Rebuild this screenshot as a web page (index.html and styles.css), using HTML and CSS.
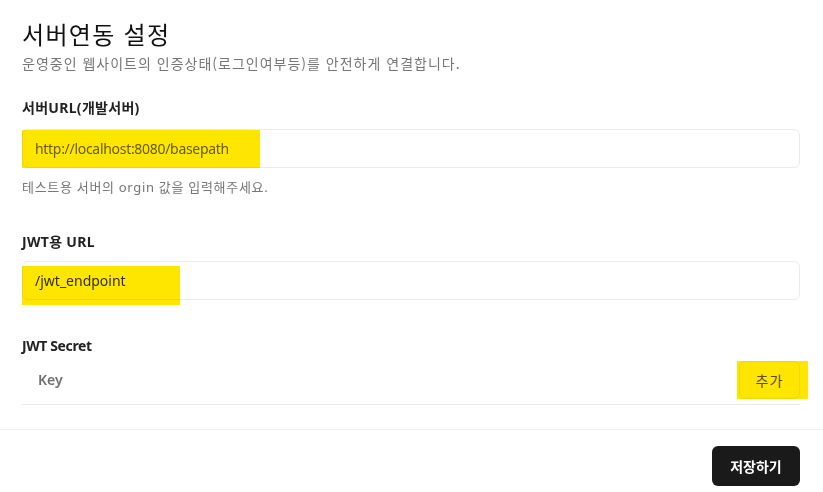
FILE: index.html
```html
<!DOCTYPE html>
<html lang="ko">
<head>
<meta charset="utf-8">
<title>서버연동 설정</title>
<link rel="stylesheet" href="styles.css">
</head>
<body>
<div class="page">
  <header class="head">
    <h1 class="title">서버연동 설정</h1>
    <p class="subtitle">운영중인 웹사이트의 인증상태(로그인여부등)를 안전하게 연결합니다.</p>
  </header>

  <section class="field field-first">
    <div class="label">서버URL(개발서버)</div>
    <div class="input input-a">
      <span class="value">http://localhost:8080/basepath</span>
      <span class="mark mark-a"></span>
    </div>
    <div class="help">테스트용 서버의 orgin 값을 입력해주세요.</div>
  </section>

  <section class="field">
    <div class="label label-b">JWT용 URL</div>
    <div class="input input-b">
      <span class="value value-dark">/jwt_endpoint</span>
      <span class="mark mark-b"></span>
    </div>
  </section>

  <section class="field">
    <div class="label label-c">JWT Secret</div>
    <div class="secret-row">
      <span class="key">Key</span>
      <button class="add-btn" type="button">추가<span class="mark mark-c"></span></button>
    </div>
  </section>
</div>
<footer class="footer">
  <button class="save-btn" type="button">저장하기</button>
</footer>
</body>
</html>
```

FILE: styles.css
```css
* { box-sizing: border-box; }
html, body { margin: 0; padding: 0; background: #fff; }
body {
  font-family: "Noto Sans", "Noto Sans CJK KR", sans-serif;
  color: #222;
}
.page {
  padding: 18px 23px 0 22px;
}
.head { display: flex; flex-direction: column; gap: 3px; }
.title {
  margin: 0;
  font-family: "Noto Sans CJK KR", sans-serif;
  font-size: 24px;
  line-height: 32px;
  font-weight: 400;
  color: #111;
  letter-spacing: 1.3px;
}
.subtitle {
  margin: 0;
  font-family: "Noto Sans CJK KR", sans-serif;
  font-size: 14px;
  line-height: 20px;
  color: #777;
  letter-spacing: 1px;
}
.field { display: flex; flex-direction: column; }
.field-first { margin-top: 25px; }
.field + .field { margin-top: 36px; }
.label {
  font-size: 14px;
  line-height: 20px;
  font-weight: 700;
  color: #222;
  margin-bottom: 11px;
  letter-spacing: 0.3px;
}
.label-b { margin-bottom: 9px; }
.label-c { margin-bottom: 5px; letter-spacing: -0.4px; }
.input {
  position: relative;
  height: 39px;
  border: 1px solid #ebebeb;
  border-radius: 6px;
  padding: 0 12px;
  display: flex;
  align-items: center;
  font-size: 14px;
}
.value { color: #666; position: relative; letter-spacing: -0.3px; }
.value-dark { color: #333; letter-spacing: 0; }
.mark {
  position: absolute;
  background: #ffe600;
  mix-blend-mode: multiply;
  pointer-events: none;
}
.mark-a { left: -1px; top: 0; width: 238px; height: 38px; }
.mark-b { left: -1px; top: 4px; width: 158px; height: 39px; }
.help {
  margin-top: 10px;
  font-size: 13px;
  line-height: 18px;
  color: #777;
  letter-spacing: 0.7px;
}
.secret-row {
  height: 44px;
  border-bottom: 1px solid #e8e8e8;
  display: flex;
  justify-content: space-between;
  align-items: flex-start;
  padding-left: 16px;
}
.key {
  font-size: 14px;
  line-height: 38px;
  font-weight: 600;
  color: #6f6f6f;
}
.add-btn {
  position: relative;
  width: 61px;
  height: 38px;
  border: 1px solid #f0f0f0;
  border-radius: 6px;
  background: #fff;
  font-family: "Noto Sans CJK KR", sans-serif;
  font-size: 14px;
  color: #555;
  padding: 0;
  letter-spacing: 1px;
  cursor: pointer;
}
.mark-c { left: -3px; top: -1px; width: 71px; height: 38px; }
.footer {
  margin-top: 24px;
  border-top: 1px solid #eeeeee;
  padding: 16px 23px 0 0;
  display: flex;
  justify-content: flex-end;
}
.save-btn {
  width: 88px;
  height: 40px;
  border: 0;
  border-radius: 6px;
  background: #1a1a1a;
  color: #fff;
  font-family: "Noto Sans CJK KR", sans-serif;
  font-size: 14px;
  font-weight: 700;
  cursor: pointer;
}
```
